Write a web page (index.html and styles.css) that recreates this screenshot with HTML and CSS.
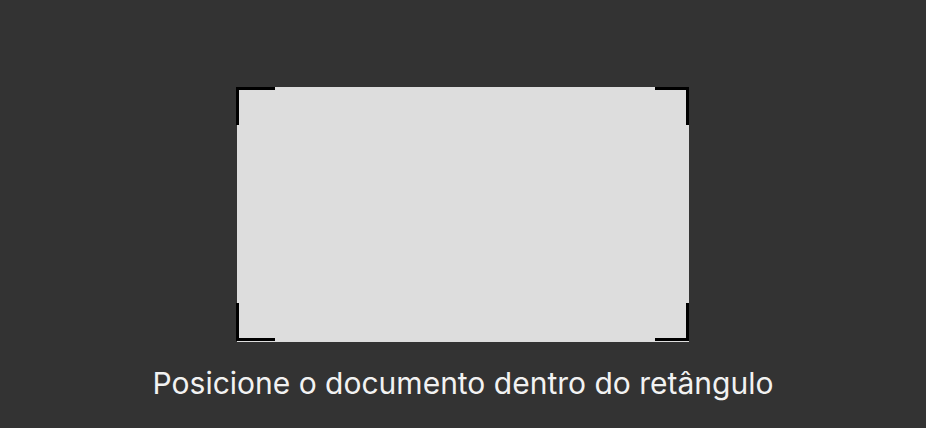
FILE: index.html
```html
<!DOCTYPE html>
<html>
    <head>
        <title> Scanner </title>
        <meta charset="UTF-8">
        <meta name="viewport" content="width=device-width, initial-scale=1">
        <link rel="stylesheet" href="styles.css">
    </head>
    <body>
        <div id="scanner">
            <div class="frame">
                <span class="corner tl"></span>
                <span class="corner tr"></span>
                <span class="corner bl"></span>
                <span class="corner br"></span>
            </div>
            <p class="hint">Posicione o documento dentro do retângulo</p>
        </div>
    </body>
</html>
```
FILE: styles.css
```css
html, body {
    margin: 0 ;
    height: 100% ;
}
body {
    background: #333 ;
    font-family: 'Inter', 'Noto Sans', sans-serif;
}
#scanner {
    display: flex ;
    flex-direction: column ;
    align-items: center ;
    padding-top: 87px ;
    }
.frame {
    position: relative ;
    width: 452px ;
    height: 255px ;
    background: #ddd ;
}
.corner {
    position: absolute ;
    width: 36px ;
    height: 35px ;
    border: 0 solid #000 ;
}
.corner.tl { top: 0 ; left: -1px ; border-top-width: 3px ; border-left-width: 3px ; }
.corner.tr { top: 0 ; right: 0 ; width: 31px ; border-top-width: 3px ; border-right-width: 3px ; }
.corner.bl { bottom: 1px ; left: -1px ; border-bottom-width: 3px ; border-left-width: 3px ; }
.corner.br { bottom: 1px ; right: 0 ; width: 31px ; border-bottom-width: 3px ; border-right-width: 3px ; }
.hint {
    margin: 23px 0 0 ;
    color: #f2f2f2 ;
    font-size: 30px ;
    line-height: 36px ;
}
```
